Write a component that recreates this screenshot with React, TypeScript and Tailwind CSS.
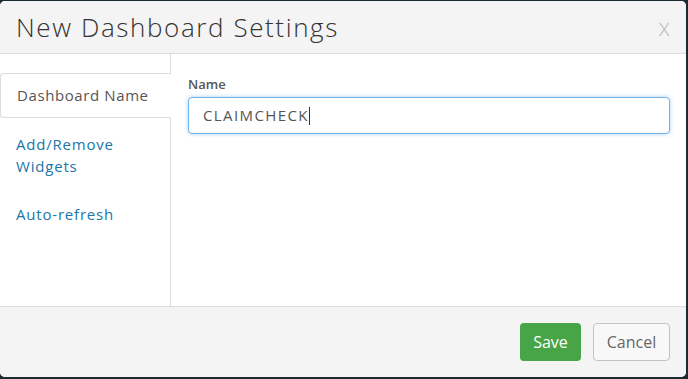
export default function App() {
  return (
    <div className="h-[379px] w-[688px] bg-[#1c2a31] pt-px pr-[2px] pb-[2px] font-['Open_Sans',sans-serif]">
      <div className="flex h-full flex-col overflow-hidden rounded-[5px] bg-white">
        <header className="flex h-[53px] shrink-0 items-center justify-between border-b border-[#dcdcdc] bg-[#f4f4f4] pl-4 pr-4">
          <h1 className="text-[26px] font-light leading-none tracking-[1.6px] text-[#333]">
            New Dashboard Settings
          </h1>
          <button
            type="button"
            aria-label="Close"
            className="text-[23px] font-light leading-none text-[#bdbdbd]"
          >
            x
          </button>
        </header>

        <div className="flex flex-1">
          <nav className="w-[171px] shrink-0 border-r border-[#dcdcdc] pt-[19px]">
            <div className="relative z-10 -mr-px flex h-[45px] items-center rounded-l-[4px] border border-r-0 border-[#dcdcdc] bg-white pl-4 text-[15px] tracking-[0.6px] text-[#565656]">
              Dashboard Name
            </div>
            <ul className="pl-4 pt-[15px] text-[15px] leading-[22px] tracking-[0.8px] text-[#1a76ab]">
              <li className="pr-4">Add/Remove Widgets</li>
              <li className="mt-[26px]">Auto-refresh</li>
            </ul>
          </nav>

          <section className="flex-1 pl-[17px] pr-4 pt-[22px]">
            <label className="block text-[13px] font-semibold leading-[16px] text-[#555]">
              Name
            </label>
            <div className="mt-[5px] flex h-[37px] items-center rounded-[4px] border border-[#74b3e6] bg-white px-[14px] text-[15px] tracking-[1.4px] text-[#555] shadow-[0_0_4px_rgba(102,175,233,0.55)]">
              CLAIMCHECK
              <span className="h-[18px] w-px bg-[#333]" />
            </div>
          </section>
        </div>

        <footer className="flex h-[71px] shrink-0 items-center justify-end gap-3 border-t border-[#dcdcdc] bg-[#f4f4f4] pr-4">
          <button
            type="button"
            className="h-[38px] w-[61px] rounded-[4px] bg-[#47a447] text-[16px] text-white"
          >
            Save
          </button>
          <button
            type="button"
            className="h-[38px] w-[77px] rounded-[4px] border border-[#c3c3c3] bg-[#f8f8f8] text-[16px] text-[#666]"
          >
            Cancel
          </button>
        </footer>
      </div>
    </div>
  )
}
